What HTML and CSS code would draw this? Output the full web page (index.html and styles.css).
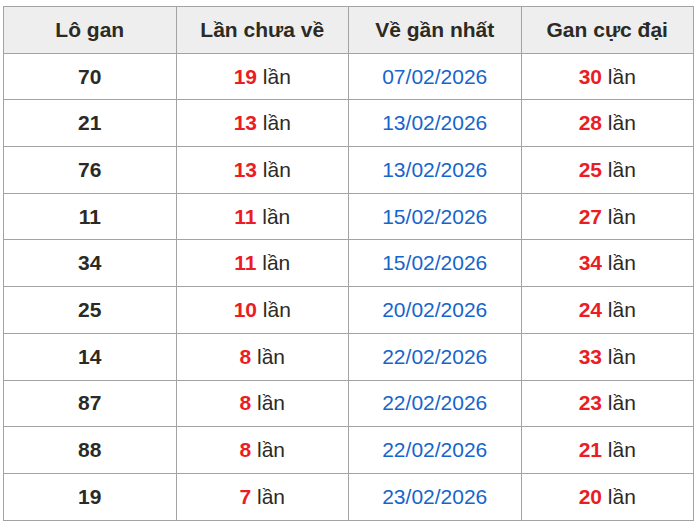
FILE: index.html
```html
<!DOCTYPE html>
<html lang="vi">
<head>
<meta charset="utf-8">
<title>Lô gan</title>
<link rel="stylesheet" href="styles.css">
</head>
<body>
<table class="gan-table">
  <thead>
    <tr><th>Lô gan</th><th>Lần chưa về</th><th>Về gần nhất</th><th>Gan cực đại</th></tr>
  </thead>
  <tbody>
    <tr><td class="lo">70</td><td><span class="num">19</span> lần</td><td class="date">07/02/2026</td><td><span class="num">30</span> lần</td></tr>
    <tr><td class="lo">21</td><td><span class="num">13</span> lần</td><td class="date">13/02/2026</td><td><span class="num">28</span> lần</td></tr>
    <tr><td class="lo">76</td><td><span class="num">13</span> lần</td><td class="date">13/02/2026</td><td><span class="num">25</span> lần</td></tr>
    <tr><td class="lo">11</td><td><span class="num">11</span> lần</td><td class="date">15/02/2026</td><td><span class="num">27</span> lần</td></tr>
    <tr><td class="lo">34</td><td><span class="num">11</span> lần</td><td class="date">15/02/2026</td><td><span class="num">34</span> lần</td></tr>
    <tr><td class="lo">25</td><td><span class="num">10</span> lần</td><td class="date">20/02/2026</td><td><span class="num">24</span> lần</td></tr>
    <tr><td class="lo">14</td><td><span class="num">8</span> lần</td><td class="date">22/02/2026</td><td><span class="num">33</span> lần</td></tr>
    <tr><td class="lo">87</td><td><span class="num">8</span> lần</td><td class="date">22/02/2026</td><td><span class="num">23</span> lần</td></tr>
    <tr><td class="lo">88</td><td><span class="num">8</span> lần</td><td class="date">22/02/2026</td><td><span class="num">21</span> lần</td></tr>
    <tr><td class="lo">19</td><td><span class="num">7</span> lần</td><td class="date">23/02/2026</td><td><span class="num">20</span> lần</td></tr>
  </tbody>
</table>
</body>
</html>
```
FILE: styles.css
```css
html, body {
  margin: 0;
  padding: 0;
  background: #fff;
}
body {
  padding: 6px 0 0 3px;
  font-family: "Liberation Sans", Arial, sans-serif;
  color: #2c2a24;
}
.gan-table {
  width: 691px;
  border-collapse: collapse;
  table-layout: fixed;
  font-size: 21px;
}
.gan-table th,
.gan-table td {
  border: 1px solid #a3a3a3;
  text-align: center;
  vertical-align: middle;
  padding: 0;
  height: 45.7px;
}
.gan-table th {
  background: #eeeeee;
  font-weight: bold;
}
.gan-table .lo {
  font-weight: bold;
}
.gan-table .num {
  font-weight: bold;
  color: #ec1c24;
}
.gan-table .date {
  color: #1565cc;
}
```
